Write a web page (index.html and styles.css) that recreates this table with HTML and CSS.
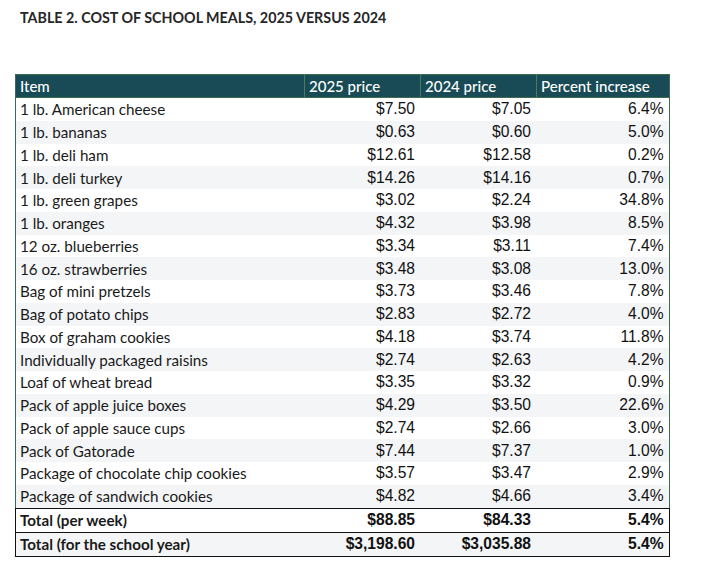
FILE: index.html
```html
<!DOCTYPE html>
<html>
<head>
<meta charset="utf-8">
<link rel="stylesheet" href="styles.css">
</head>
<body>
<h1 class="title">TABLE 2. COST OF SCHOOL MEALS, 2025 VERSUS 2024</h1>
<table class="costs">
<thead>
<tr><th class="c-item">Item</th><th class="c-num">2025 price</th><th class="c-num">2024 price</th><th class="c-pct">Percent increase</th></tr>
</thead>
<tbody>
<tr><td>1 lb. American cheese</td><td class="n">$7.50</td><td class="n">$7.05</td><td class="n">6.4%</td></tr>
<tr><td>1 lb. bananas</td><td class="n">$0.63</td><td class="n">$0.60</td><td class="n">5.0%</td></tr>
<tr><td>1 lb. deli ham</td><td class="n">$12.61</td><td class="n">$12.58</td><td class="n">0.2%</td></tr>
<tr><td>1 lb. deli turkey</td><td class="n">$14.26</td><td class="n">$14.16</td><td class="n">0.7%</td></tr>
<tr><td>1 lb. green grapes</td><td class="n">$3.02</td><td class="n">$2.24</td><td class="n">34.8%</td></tr>
<tr><td>1 lb. oranges</td><td class="n">$4.32</td><td class="n">$3.98</td><td class="n">8.5%</td></tr>
<tr><td>12 oz. blueberries</td><td class="n">$3.34</td><td class="n">$3.11</td><td class="n">7.4%</td></tr>
<tr><td>16 oz. strawberries</td><td class="n">$3.48</td><td class="n">$3.08</td><td class="n">13.0%</td></tr>
<tr><td>Bag of mini pretzels</td><td class="n">$3.73</td><td class="n">$3.46</td><td class="n">7.8%</td></tr>
<tr><td>Bag of potato chips</td><td class="n">$2.83</td><td class="n">$2.72</td><td class="n">4.0%</td></tr>
<tr><td>Box of graham cookies</td><td class="n">$4.18</td><td class="n">$3.74</td><td class="n">11.8%</td></tr>
<tr><td>Individually packaged raisins</td><td class="n">$2.74</td><td class="n">$2.63</td><td class="n">4.2%</td></tr>
<tr><td>Loaf of wheat bread</td><td class="n">$3.35</td><td class="n">$3.32</td><td class="n">0.9%</td></tr>
<tr><td>Pack of apple juice boxes</td><td class="n">$4.29</td><td class="n">$3.50</td><td class="n">22.6%</td></tr>
<tr><td>Pack of apple sauce cups</td><td class="n">$2.74</td><td class="n">$2.66</td><td class="n">3.0%</td></tr>
<tr><td>Pack of Gatorade</td><td class="n">$7.44</td><td class="n">$7.37</td><td class="n">1.0%</td></tr>
<tr><td>Package of chocolate chip cookies</td><td class="n">$3.57</td><td class="n">$3.47</td><td class="n">2.9%</td></tr>
<tr><td>Package of sandwich cookies</td><td class="n">$4.82</td><td class="n">$4.66</td><td class="n">3.4%</td></tr>
<tr class="total"><td>Total (per week)</td><td class="n">$88.85</td><td class="n">$84.33</td><td class="n">5.4%</td></tr>
<tr class="total"><td>Total (for the school year)</td><td class="n">$3,198.60</td><td class="n">$3,035.88</td><td class="n">5.4%</td></tr>
</tbody>
</table>
</body>
</html>
```

FILE: styles.css
```css
html, body {
  margin: 0;
  padding: 0;
  background: #ffffff;
}
body {
  padding: 8px 0 0 20px;
  font-family: Lato, "Open Sans", sans-serif;
  color: #1c1c1c;
}
.title {
  margin: 0;
  font-family: Lato, sans-serif;
  font-size: 14.3px;
  font-weight: 700;
  color: #262626;
  line-height: 20px;
}
.costs {
  margin: 46px 0 0 -5px;
  border-collapse: collapse;
  table-layout: fixed;
  width: 655px;
  border: 1px solid #3f6b4f;
}
.costs th {
  background: #184b55;
  color: #ffffff;
  font-weight: 500;
  font-size: 15px;
  text-align: left;
  height: 22px;
  padding: 0 4px;
  border-left: 1.5px solid #4c7a5a;
  border-bottom: 1px solid #3f6b4f;
  line-height: 22px;
}
.costs th.c-item { width: 280px; border-left: none; }
.costs th.c-num { width: 107px; }
.costs th.c-pct { width: auto; }
.costs td {
  font-size: 15.2px;
  height: 22.75px;
  padding: 0 4px 0 4px;
  line-height: 20px;
  white-space: nowrap;
  color: #1a1a1a;
}
.costs td.n {
  font-family: "Liberation Sans", Arial, sans-serif;
  font-size: 15.6px;
  text-align: right;
  padding-right: 5.5px;
  color: #111;
}
.costs tbody tr:nth-child(even) td { background: #f4f5f7; }
.costs tr.total td {
  background: #ffffff;
  font-weight: 700;
  height: 23px;
  border-top: 1.5px solid #111;
}
.costs tr.total td:first-child { border-left: 1.5px solid #111; }
.costs tr.total td:last-child { border-right: 1.5px solid #111; }
.costs tr.total:last-child td { border-bottom: 1.5px solid #111; }
```
